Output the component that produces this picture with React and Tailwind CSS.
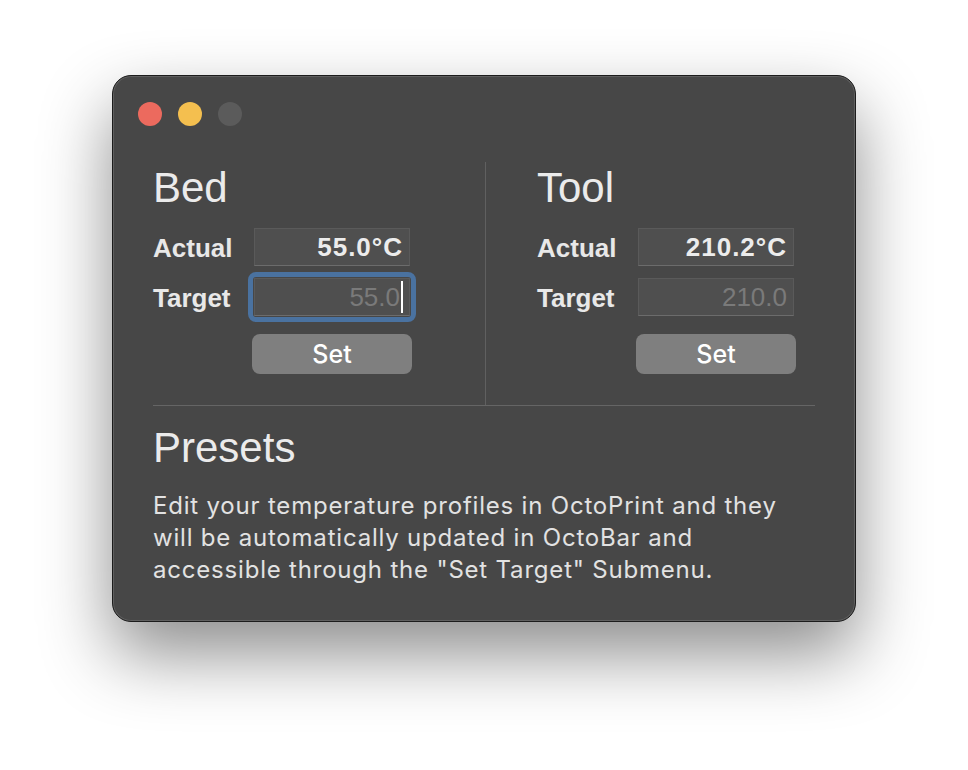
import React from 'react';

const font = { fontFamily: '"Liberation Sans", Arial, sans-serif' };
const textFont = { fontFamily: 'Inter, "Liberation Sans", sans-serif' };

// read-only / editable value box
const Field = ({ value, placeholder, focused }) => {
  return (
    <div className="relative w-[156px] h-[38px]">
      {focused && (
        <div className="absolute -inset-[6px] rounded-[8px] border-[5px] border-[#4a72a0]"></div>
      )}
      <div className="w-full h-full bg-[#4f4f4f] border border-[#5a5a5a] border-b-[#6c6c6c] flex items-center justify-end pr-[6px]">
        {value ? (
          <span className="text-[26px] font-bold text-[#ececec] tracking-[1px] leading-none">{value}</span>
        ) : (
          <span className="text-[26px] text-[#7a7a7a] leading-none">{placeholder}</span>
        )}
        {focused && <span className="inline-block w-[2px] h-[32px] bg-white ml-[1px]"></span>}
      </div>
    </div>
  );
};

const Row = ({ label, children }) => (
  <div className="flex items-center h-[38px]">
    <span className="w-[101px] pt-[2px] text-[26px] font-bold text-[#e8e8e8] leading-none">{label}</span>
    {children}
  </div>
);

const SetButton = () => (
  <div
    className="ml-[99px] mt-[18px] w-[160px] h-[40px] rounded-[8px] bg-[#7f7f7f] flex items-center justify-center text-[25px] font-medium text-white leading-none"
    style={textFont}
  >
    Set
  </div>
);

const Heater = ({ title, actual, target, focused }) => (
  <div>
    <h2 className="mt-[5px] text-[42px] leading-[42px] text-[#ebebeb]">{title}</h2>
    <div className="mt-[19px] flex flex-col gap-[12px]">
      <Row label="Actual">
        <Field value={actual} />
      </Row>
      <Row label="Target">
        <Field placeholder={target} focused={focused} />
      </Row>
    </div>
    <SetButton />
  </div>
);

const App = () => {
  return (
    <div className="min-h-screen bg-white pt-[75px] pl-[112px]" style={font}>
      <div className="w-[744px] h-[547px] rounded-[19px] bg-[#474747] border border-[#1c1c1c] shadow-[0_32px_70px_rgba(0,0,0,0.45),inset_0_0_0_1px_#5f5f5f]">
        {/* title bar */}
        <div className="flex gap-[16px] pt-[26px] pl-[25px]">
          <span className="w-[24px] h-[24px] rounded-full bg-[#ec6a5e]"></span>
          <span className="w-[24px] h-[24px] rounded-full bg-[#f4bf4f]"></span>
          <span className="w-[24px] h-[24px] rounded-full bg-[#5b5b5b]"></span>
        </div>

        <div className="px-[40px]">
          <div className="mt-[36px] flex">
            <div className="w-[332px] pb-[31px]">
              <Heater title="Bed" actual="55.0°C" target="55.0" focused />
            </div>
            <div className="w-px bg-[#606060]"></div>
            <div className="pl-[51px] pb-[31px]">
              <Heater title="Tool" actual="210.2°C" target="210.0" />
            </div>
          </div>
          <div className="h-px bg-[#656565]"></div>

          <h2 className="mt-[21px] text-[42px] leading-[42px] text-[#ebebeb]">Presets</h2>
          <p className="mt-[21px] text-[24px] leading-[32px] tracking-[0.8px] text-[#e2e2e2]" style={textFont}>
            Edit your temperature profiles in OctoPrint and they
            <br />
            will be automatically updated in OctoBar and
            <br />
            accessible through the "Set Target" Submenu.
          </p>
        </div>
      </div>
    </div>
  );
};

export default App;
